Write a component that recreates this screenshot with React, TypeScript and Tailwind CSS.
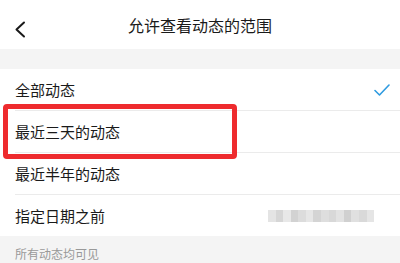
import React from 'react';

const rows = ['全部动态', '最近三天的动态', '最近半年的动态', '指定日期之前'];

const blurBlocks = ['#e4e4e4', '#d6d6d6', '#e8e8e8', '#d2d2d2', '#dcdcdc', '#e6e6e6', '#d4d4d4', '#dedede', '#d8d8d8', '#e2e2e2', '#d0d0d0', '#e0e0e0', '#d9d9d9', '#e5e5e5'];

export default function App() {
  return (
    <div className="relative w-[400px] h-[263px] overflow-hidden bg-[#f4f4f4] font-['Noto_Sans_CJK_SC',sans-serif]">
      {/* header */}
      <div className="relative h-[49px] bg-white flex items-center justify-center">
        <svg className="absolute left-[14px] top-[21px]" width="12" height="17" viewBox="0 0 12 17" fill="none">
          <path d="M10 1.5L2.5 8.5L10 15.5" stroke="#1a1a1a" strokeWidth="2" strokeLinecap="round" strokeLinejoin="round" />
        </svg>
        <span className="text-[16px] text-[#1a1a1a] leading-none">允许查看动态的范围</span>
      </div>

      <div className="h-[20px]" />

      {/* list */}
      <div className="bg-white">
        {rows.map((label, i) => (
          <div key={label}>
            {i > 0 && <div className="ml-[15px] h-px bg-[#ebebeb]" />}
            <div className="h-[41px] flex items-center justify-between pl-[15px] pr-[10px]">
              <span className="text-[15px] text-[#1a1a1a] leading-none">{label}</span>
              {i === 0 && (
                <svg width="16" height="12" viewBox="0 0 16 12" fill="none">
                  <path d="M1 6.5L5.5 11L15 1" stroke="#2f9be0" strokeWidth="1.6" strokeLinecap="round" strokeLinejoin="round" />
                </svg>
              )}
              {i === 3 && (
                <div className="flex h-[12px] w-[106px] mr-[16px]">
                  {blurBlocks.map((c, j) => (
                    <div key={j} className="flex-1 h-full" style={{ backgroundColor: c }} />
                  ))}
                </div>
              )}
            </div>
          </div>
        ))}
      </div>

      {/* footer */}
      <div className="pl-[15px] pt-[12px] text-[12px] leading-none text-[#999999]">所有动态均可见</div>

      {/* annotation box */}
      <div className="absolute left-[3px] top-[104px] w-[234px] h-[55px] border-[5px] border-[#ee2b2e] rounded-[4px]" />
    </div>
  );
}
